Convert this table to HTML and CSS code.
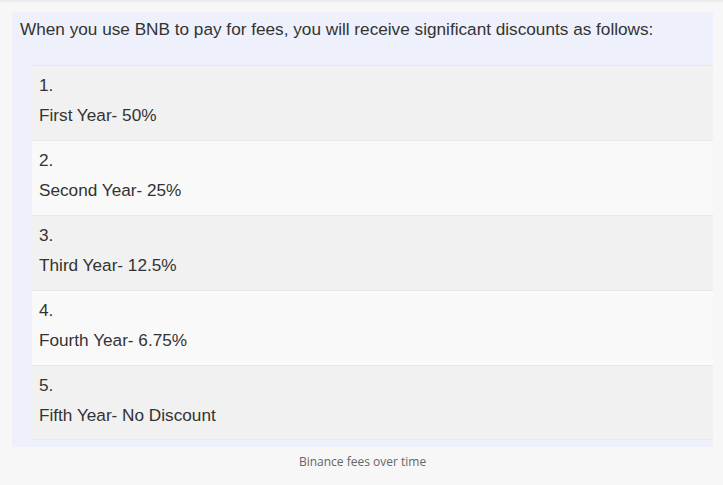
FILE: index.html
```html
<!DOCTYPE html>
<html>
<head>
<meta charset="utf-8">
<link rel="stylesheet" href="styles.css">
</head>
<body>
<div class="page">
  <figure class="figure">
    <div class="box">
      <p class="intro">When you use BNB to pay for fees, you will receive significant discounts as follows:</p>
      <div class="rows">
        <div class="row odd"><div class="num">1.</div><div class="txt">First Year- 50%</div></div>
        <div class="row even"><div class="num">2.</div><div class="txt">Second Year- 25%</div></div>
        <div class="row odd"><div class="num">3.</div><div class="txt">Third Year- 12.5%</div></div>
        <div class="row even"><div class="num">4.</div><div class="txt">Fourth Year- 6.75%</div></div>
        <div class="row odd"><div class="num">5.</div><div class="txt">Fifth Year- No Discount</div></div>
      </div>
    </div>
    <figcaption class="caption">Binance fees over time</figcaption>
  </figure>
</div>
</body>
</html>
```

FILE: styles.css
```css
html, body {
  margin: 0;
  padding: 0;
  background: #f7f7f7;
}
.page {
  border-top: 2px solid #ececec;
  padding: 10px 10px 0 12px;
  height: 483px;
  box-sizing: border-box;
  font-family: "Liberation Sans", Arial, sans-serif;
  color: #333;
}
.figure {
  margin: 0;
}
.box {
  background: #eef1fb;
  padding: 5px 0 7px 20px;
}
.intro {
  margin: 0 0 0 -12px;
  font-size: 17.2px;
  line-height: 24px;
  height: 48px;
}
.rows {
  display: flex;
  flex-direction: column;
}
.row {
  height: 75px;
  box-sizing: border-box;
  border-top: 1px solid #e6e8ee;
  padding: 8px 0 0 7px;
  font-size: 17.2px;
}
.row:last-child {
  border-bottom: 1px solid #e6e8ee;
}
.odd { background: #f1f1f1; }
.even { background: #f9f9f9; }
.num {
  line-height: 22px;
  height: 30px;
}
.txt {
  line-height: 22px;
}
.caption {
  text-align: center;
  font-family: "Open Sans", sans-serif;
  font-size: 12px;
  color: #666;
  margin-top: 6px;
}
```
